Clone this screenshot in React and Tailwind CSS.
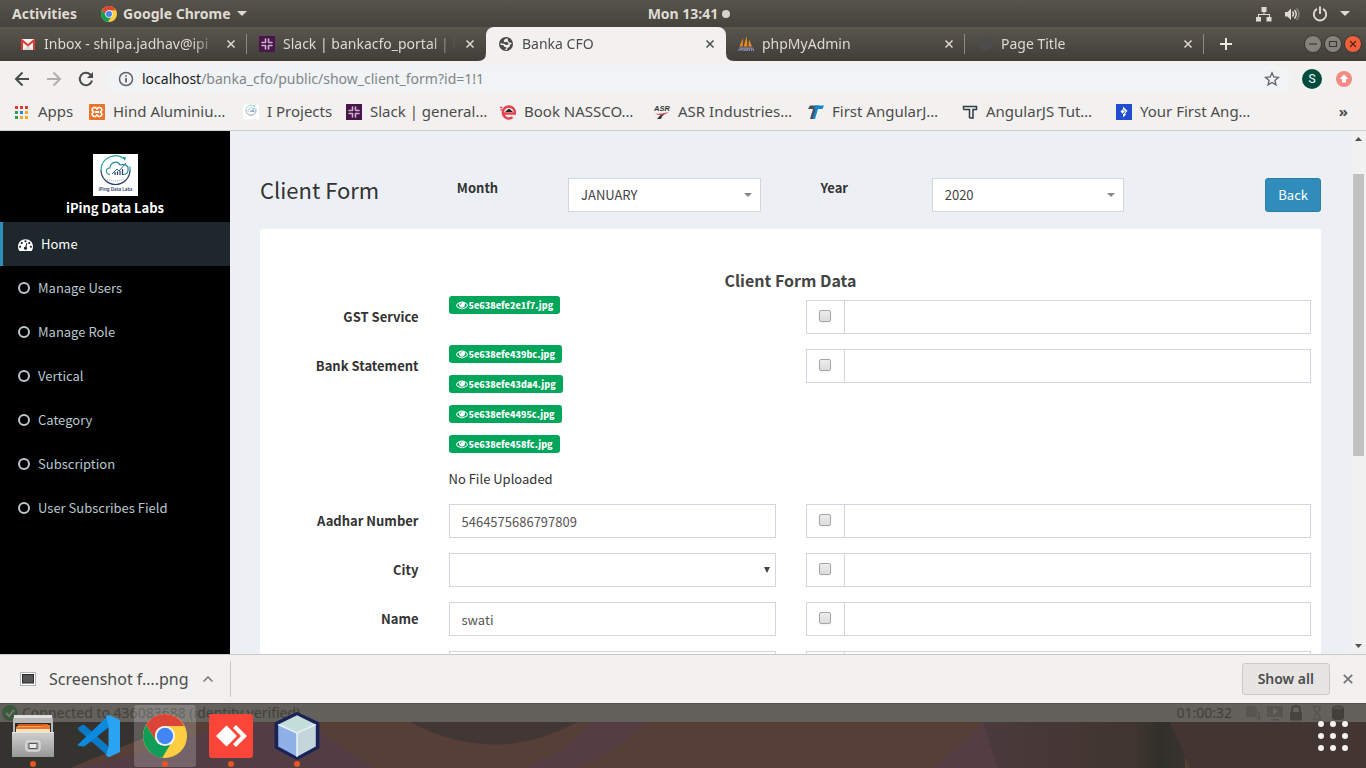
import React from "react";

const uiFont = "font-['Noto_Sans','Open_Sans',sans-serif]";
const pageFont = "font-['Noto_Sans_CJK_SC','Noto_Sans',sans-serif]";

/* ---------- shared drawings ---------- */

function ChromeLogo({ className }) {
  return (
    <svg viewBox="0 0 48 48" className={className} aria-hidden="true">
      <circle cx="24" cy="24" r="24" fill="#ffcd40" />
      <path d="M24 0a24 24 0 0 1 20.9 13H24a11 11 0 0 0-9.6 16.4L3.4 11.9A24 24 0 0 1 24 0z" fill="#db4437" />
      <path d="M3.3 12A24 24 0 0 0 21 47.8l10.4-17.2A11 11 0 0 1 14.4 29.400z" fill="#0f9d58" />
      <circle cx="24" cy="24" r="11" fill="#f4f4f4" />
      <circle cx="24" cy="24" r="8.900" fill="#4285f4" />
    </svg>
  );
}

function GmailLogo() {
  return (
    <svg viewBox="0 0 16 16" className="size-4">
      <path d="M1 3h14v11H1z" fill="#f2f2f2" />
      <path d="M3.500 14 8 9l4.500 5z" fill="#d9d9d9" />
      <path d="M1 14V3.500C1 3 1.400 3 2 3l6 5 6-5c.6 0 1 0 1 .5V14h-2V6.500L8 10.500l-5-4V14z" fill="#dd3b32" />
    </svg>
  );
}

function SlackLogo() {
  return (
    <svg viewBox="0 0 16 16" className="size-4">
      <path d="M0 0h16v16H0z" fill="#4a154b" />
      <g fill="none" stroke="#c9b3ca" strokeWidth="1.600" strokeLinecap="round">
        <path d="M6.500 3v3.500M3 6.500h2M9.500 3v3M13 6.500h-3M3 9.500h3.500M6.500 10v3M9.500 9.500V13M10 9.500h3" />
      </g>
    </svg>
  );
}

function GlobeIcon({ className }) {
  return (
    <svg viewBox="0 0 16 16" className={className}>
      <circle cx="8" cy="8" r="7" fill="currentColor" />
      <path d="M9.500 2.300 7 3 5.500 5.200 7 6.300l2-.5 1.500 1.400-.5 1.600-2 .2-2-1.200-3.800-.6.300 1.500 3 .6 1 1.600 2 .3-.3 1.400L6.500 14l2-.1 1.200-2 2-1.500.3-2L13.800 8l-1-1.500-1.500.3-1.300-2z" fill="#f2f1f0" />
    </svg>
  );
}

function PmaLogo() {
  return (
    <svg viewBox="0 0 16 16" className="size-4">
      <path d="M5 2 4.700 10.500H1.500zM8.500 0l1 10.500H5.800zM11 3.500l3 7h-3.500z" fill="#f08c1c" />
      <path d="M1 11.500h14l-1 1.200H2z" fill="#8b8bb5" />
      <path d="M1 15v-2l2 1 1-1v2m2-2v2m0-1h2m0-1v2m1 0v-2l1.500 1 1-1v2m2 0v-2h2v2" fill="none" stroke="#8f90b8" />
    </svg>
  );
}

function CloudLogo({ className, caption }) {
  return (
    <svg viewBox="0 0 45 42" className={className} role="img" aria-label="iPing Data Labs">
      <path d="M0 0h45v42H0z" fill="#fff" />
      <path d="M8 16a14.500 14.500 0 0 0 29 0" fill="none" stroke="#27406f" strokeWidth="1.200" />
      <path d="M8 16A14.500 14.500 0 0 1 31 4.500M36.800 12.500q.3 2 .2 3.500" fill="none" stroke="#23a6a0" strokeWidth="1.200" />
      <path d="m29 3 4 .2-1 3.500z" fill="#16a08f" />
      <path d="M17 20.500c-5 0-5-7 0-6.500 0-6 8-8 10-3 5-2 9 1 8 5 0 3-2 4.500-5 4.500" fill="none" stroke="#2b8b9c" strokeWidth="1.100" />
      <path d="m19 20 5-5 2 2 7-8" fill="none" stroke="#1f6f94" />
      <path d="M22 21v-3m2.500 3v-3.500m2.500 3.500v-4m2.500 4v-6" stroke="#2c3f73" strokeWidth="1.200" />
      <path d="M14 25.500q8 3 17 0" fill="none" stroke="#8796b5" strokeDasharray="1 1" />
      {caption && (
        <text x="22.500" y="37" textAnchor="middle" fontSize="4.500" fontWeight="600" fill="#2b3a6b" fontFamily="Noto Sans">
          iPing Data Labs
        </text>
      )}
    </svg>
  );
}

function CloseX({ className }) {
  return (
    <svg viewBox="0 0 10 10" className={className}>
      <path d="m1.500 1.500 7 7m0-7-7 7" stroke="currentColor" strokeWidth="1.500" />
    </svg>
  );
}

/* ---------- desktop top bar ---------- */

function TopBar() {
  return (
    <header className="grid h-[27px] shrink-0 grid-cols-3 items-center bg-linear-to-b from-[#57544c] to-[#45433d] pr-4 pl-3 text-sm font-bold text-[#dfdbd2]">
      <div className="flex items-center gap-6">
        <button>Activities</button>
        <button className="flex items-center gap-1.5">
          <ChromeLogo className="size-4" />
          Google Chrome
          <svg viewBox="0 0 10 5" className="h-[5px] w-[10px]"><path d="M0 0h10L5 5z" fill="currentColor" /></svg>
        </button>
      </div>
      <div className="flex items-center justify-center gap-1 pl-4">
        Mon 13:41
        <span className="size-2 rounded-full bg-[#d6d3cc]" />
      </div>
      <div className="flex items-center justify-end gap-3">
        <svg viewBox="0 0 16 16" className="size-4" fill="currentColor">
          <path d="M5.500 1h5v5h-2v2H14v3h1.500v4.500h-5V11H13V9H3v2h2v4.500H0V11h2V8h5.500V6h-2z" />
        </svg>
        <svg viewBox="0 0 16 16" className="size-4" fill="none" stroke="currentColor" strokeWidth="1.500">
          <path d="M1 6v4.500h2.500L7 14V2.500L3.500 6z" fill="currentColor" stroke="none" />
          <path d="M8.500 5.500q2 2.500 0 5M10.500 4q3.500 4 0 8.500" />
          <path d="M12.500 2.500q5 5.500 0 11.500" opacity=".4" />
        </svg>
        <svg viewBox="0 0 16 16" className="size-4" fill="none" stroke="currentColor" strokeWidth="1.900">
          <path d="M5 2.800a6.200 6.200 0 1 0 6 0M8 .5V8" />
        </svg>
        <svg viewBox="0 0 10 5" className="h-[5px] w-[10px]"><path d="M0 0h10L5 5z" fill="currentColor" /></svg>
      </div>
    </header>
  );
}

/* ---------- browser chrome ---------- */

const tabs = [
  { title: "Inbox - shilpa.jadhav@ipi", icon: <GmailLogo />, line: true },
  { title: "Slack | bankacfo_portal | i", icon: <SlackLogo /> },
  { title: "Banka CFO", icon: <GlobeIcon className="size-4 text-[#4a4a48]" />, active: true },
  { title: "phpMyAdmin", icon: <PmaLogo />, line: true },
  { title: "Page Title", icon: <span className="size-3.5 rounded-full bg-[#4c4c4b]" />, line: true },
];

function Tab({ title, icon, active, line }) {
  return (
    <div
      className={
        active
          ? "relative flex h-full max-w-[240px] flex-1 items-center gap-2 rounded-t-lg bg-[#f2f1f0] pr-[11px] pl-3 text-[#4c4c4c]"
          : "relative flex h-full max-w-[239px] flex-1 items-center gap-2 pr-[11px] pl-3 text-[#dedad2]"
      }
    >
      {active && (
        <>
          <svg viewBox="0 0 8 8" className="absolute bottom-0 -left-2 size-2"><path d="M8 0v8H0q8 0 8-8z" fill="#f2f1f0" /></svg>
          <svg viewBox="0 0 8 8" className="absolute -right-2 bottom-0 size-2"><path d="M0 0v8h8Q0 8 0 0z" fill="#f2f1f0" /></svg>
        </>
      )}
      <span className="flex w-4 shrink-0 justify-center">{icon}</span>
      <a href="#tab" className="min-w-0 flex-1 overflow-hidden mask-r-from-85% mask-r-to-100% whitespace-nowrap">{title}</a>
      <button aria-label={"Close " + title}><CloseX className="size-[10px]" /></button>
      {line && <span className="absolute top-[7px] right-0 h-5 w-px bg-[#8b8982]" />}
    </div>
  );
}

function WindowButton({ label, close, children }) {
  return (
    <button
      aria-label={label}
      className={
        close
          ? "flex size-4 items-center justify-center rounded-full bg-[#ef5f3c] text-[#5b1f10] ring-1 ring-[#3a3833]"
          : "flex size-4 items-center justify-center rounded-full bg-[#85837c] text-[#3a3833] ring-1 ring-[#3a3833]"
      }
    >
      <svg viewBox="0 0 10 10" className="size-[10px]" fill="none" stroke="currentColor" strokeWidth="1.200">{children}</svg>
    </button>
  );
}

function TabStrip() {
  return (
    <nav className="flex h-[34px] shrink-0 items-center bg-linear-to-b from-[#59564e] to-[#403e39] pr-[5px] pl-2 text-sm">
      {tabs.map((t) => <Tab key={t.title} {...t} />)}
      <button aria-label="New tab" className="ml-4 text-[#ebe8e2]">
        <svg viewBox="0 0 12 12" className="size-3"><path d="M6 0v12M0 6h12" stroke="currentColor" strokeWidth="2" /></svg>
      </button>
      <div className="ml-auto flex gap-1">
        <WindowButton label="Minimize"><path d="M1 5h8" /></WindowButton>
        <WindowButton label="Maximize"><path d="M1.500 2.500h7v5h-7z" /></WindowButton>
        <WindowButton label="Close" close><path d="m2 2 6 6m0-6L2 8" /></WindowButton>
      </div>
    </nav>
  );
}

function Toolbar() {
  return (
    <div className="flex h-9 shrink-0 items-center bg-[#f2f1f0] pr-3.5 pl-3.5 text-[#4c4c4c]">
      <div className="flex items-center gap-4">
        <button aria-label="Back">
          <svg viewBox="0 0 16 16" className="size-4" fill="none" stroke="currentColor" strokeWidth="2"><path d="M15 8H2m6.500-6.500L2 8l6.500 6.500" /></svg>
        </button>
        <button aria-label="Forward" className="text-[#b0afad]">
          <svg viewBox="0 0 16 16" className="size-4" fill="none" stroke="currentColor" strokeWidth="2"><path d="M1 8h13M7.500 1.500 14 8l-6.500 6.500" /></svg>
        </button>
        <button aria-label="Reload">
          <svg viewBox="0 0 16 16" className="size-4" fill="none" stroke="currentColor" strokeWidth="2"><path d="M14 9.500A6.200 6.200 0 1 1 12.500 3.700L14 5.500" /><path d="M15 1v6H9z" fill="currentColor" stroke="none" /></svg>
        </button>
      </div>
      <div className="ml-3.5 flex h-7 flex-1 items-center gap-2 rounded-full bg-[#f1f3f4] pr-2.5 pl-2.5">
        <svg viewBox="0 0 16 16" className="size-4" fill="none" stroke="#5f6368" strokeWidth="1.500"><circle cx="8" cy="8" r="6.500" /><path d="M8 7v4.500M8 4.200v1.600" strokeWidth="1.800" /></svg>
        <span className="min-w-0 flex-1 text-sm text-[#80868b]"><span className="text-[#202124]">localhost</span>/banka_cfo/public/show_client_form?id=1!1</span>
        <button aria-label="Bookmark this page">
          <svg viewBox="0 0 16 16" className="size-4" fill="none" stroke="#5f6368" strokeWidth="1.300"><path d="m8 1.800 1.800 4.200 4.600.4-3.500 3 1.100 4.500L8 11.500l-4 2.400 1.100-4.500-3.500-3L6.200 6z" /></svg>
        </button>
      </div>
      <button className="ml-3 flex size-5 items-center justify-center rounded-full bg-[#004d40] font-['Roboto'] text-xs text-white">S</button>
      <button aria-label="Update" className="ml-3.5">
        <svg viewBox="0 0 16 16" className="size-4"><circle cx="8" cy="8" r="8" fill="#f58b84" /><path d="M8 3.500 12.500 8H10v3.500H6V8H3.500z" fill="#fff" /></svg>
      </button>
    </div>
  );
}

const bookmarks = [
  {
    title: "Hind Aluminiu…",
    icon: <svg viewBox="0 0 16 16" className="size-4"><rect width="16" height="16" rx="1" fill="#e8742c" /><path d="M5 3.500h1.500L8 5l1.500-1.500H11Q13 4 13 6L11.500 8l1.500 2q0 2-2 2.500H9.500L8 11l-1.500 1.500H5Q3 12 3 10l1.500-2L3 6q0-2 2-2.500z" fill="none" stroke="#fff" strokeWidth="1.600" /><path d="M6 8h4" stroke="#fff" strokeWidth="2" /></svg>,
  },
  { title: "I Projects", icon: <CloudLogo className="size-4" />, short: true },
  { title: "Slack | general…", icon: <SlackLogo /> },
  {
    title: "Book NASSCO…",
    icon: <svg viewBox="0 0 16 16" className="size-4" fill="none" stroke="#e7404e"><path d="M3.500 9.500h11.300a6 6 0 1 0-2.300 3.800" strokeWidth="2.400" /><path d="M0 3.500h2.500M.5 6h2" strokeWidth="1.300" /><path d="m5 8 4-3.500L13 8z" fill="#222" stroke="none" /></svg>,
  },
  {
    title: "ASR Industries…",
    icon: <svg viewBox="0 0 16 16" className="size-4"><text x="0" y="7" fontSize="7.500" fontWeight="700" fontStyle="italic" fontFamily="Liberation Sans" fill="#333">ASR</text><path d="M1 9.500q6 1 14-1.500-6 5-12 2.500z" fill="#e34b60" /><path d="m3 15 3-3.500 5-2-3 3-1 2.500z" fill="#3a3a3a" /></svg>,
  },
  {
    title: "First AngularJ…",
    icon: <svg viewBox="0 0 16 16" className="size-4"><path d="M2 1.500h9L10 5H0z" fill="#4b4f55" /><path d="M7 1.500h9L14.500 5H10L7 15H2.500L6.500 3z" fill="#1488cf" /><path d="M5 5h2.500l-3 10H2z" fill="#4b4f55" /></svg>,
  },
  {
    title: "AngularJS Tut…",
    icon: <svg viewBox="0 0 16 16" className="size-4" fill="none" stroke="#2d3b45" strokeWidth="1.500"><path d="M1.500 5.500v-3h13v3H11V14H7.500M1.500 5.500H5M4 5.500h3.500V14" /></svg>,
  },
  {
    title: "Your First Ang…",
    icon: <svg viewBox="0 0 16 16" className="size-4"><path d="M0 0h16v16H0z" fill="#204ecf" /><path d="m7 2.500 4.500 4.500L9 9.500l1 1-3 3V10L4.500 7.500 7 5z" fill="#fff" /><path d="m7 5.500 2 2-2 2.500" stroke="#204ecf" fill="none" /></svg>,
  },
];

const appDots = ["#e53935", "#e53935", "#e53935", "#2e9d57", "#1e88e5", "#f9a825", "#2e9d57", "#f9a825", "#f9a825"];

function BookmarkBar() {
  return (
    <nav className="flex h-[34px] shrink-0 items-center border-b border-[#cfcfce] bg-[#f2f1f0] pr-[18px] pb-1 pl-3.5 text-[15px] text-[#4c4c4c]">
      <a href="#apps" className="flex w-[75px] shrink-0 items-center gap-2">
        <svg viewBox="0 0 16 16" className="size-4">
          {appDots.map((c, i) => <rect key={i} x={1 + (i % 3) * 5} y={2 + Math.floor(i / 3) * 5} width="3" height="3" fill={c} />)}
        </svg>
        Apps
      </a>
      {bookmarks.map((b) => (
        <a
          key={b.title}
          href="#bookmark"
          className={b.short ? "flex w-[103px] shrink-0 items-center gap-2 whitespace-nowrap" : "flex w-[154px] shrink-0 items-center gap-2 whitespace-nowrap"}
        >
          {b.icon}
          {b.title}
        </a>
      ))}
      <button className="ml-auto font-bold">»</button>
    </nav>
  );
}

/* ---------- page ---------- */

const menu = ["Manage Users", "Manage Role", "Vertical", "Category", "Subscription", "User Subscribes Field"];

function Sidebar() {
  return (
    <aside className="w-[230px] shrink-0 bg-black text-[13px] leading-5 text-[#b8c7ce]">
      <div className="flex h-[91px] flex-col items-center pt-[23px]">
        <CloudLogo className="h-[42px] w-[45px]" caption />
        <p className="mt-0.5 font-bold text-white">iPing Data Labs</p>
      </div>
      <nav>
        <a href="#home" className="flex h-11 items-center gap-2 border-l-3 border-[#308dbb] bg-[#1e282c] pl-[15px] text-white">
          <svg viewBox="0 0 1792 1792" className="size-[15px]" fill="currentColor">
            <path d="M384 1152q0-53-37.500-90.500t-90.500-37.500-90.500 37.500-37.500 90.500 37.500 90.500 90.500 37.500 90.500-37.500 37.500-90.500zm192-448q0-53-37.500-90.500t-90.500-37.500-90.500 37.500-37.500 90.500 37.500 90.500 90.500 37.500 90.500-37.500 37.500-90.500zm428 481l101-382q6-26-7.500-48.500t-38.500-29.500-48 6.500-30 39.500l-101 382q-60 5-107 43.500t-63 98.500q-20 77 20 146t117 89 146-20 89-117q16-60-6-117t-72-91zm660-33q0-53-37.500-90.500t-90.500-37.500-90.500 37.500-37.500 90.500 37.500 90.500 90.500 37.500 90.500-37.500 37.500-90.500zm-640-640q0-53-37.500-90.500t-90.500-37.500-90.500 37.500-37.500 90.500 37.500 90.500 90.500 37.500 90.500-37.500 37.500-90.500zm448 192q0-53-37.500-90.500t-90.500-37.500-90.500 37.500-37.500 90.500 37.500 90.500 90.500 37.500 90.500-37.500 37.500-90.500zm320 448q0 261-141 483-19 29-54 29h-1402q-35 0-54-29-141-221-141-483 0-182 71-348t191-286 286-191 348-71 348 71 286 191 191 286 71 348z" />
          </svg>
          Home
        </a>
        {menu.map((m) => (
          <a key={m} href="#menu" className="flex h-11 items-center gap-2 pl-[18px]">
            <svg viewBox="0 0 12 12" className="size-3"><circle cx="6" cy="6" r="5" fill="none" stroke="currentColor" strokeWidth="2" /></svg>
            {m}
          </a>
        ))}
      </nav>
    </aside>
  );
}

function HeaderSelect({ id, label, value }) {
  return (
    <div className="col-span-4 grid grid-cols-12 px-[15px]">
      <label htmlFor={id} className="col-span-4 px-[15px] font-bold">{label}</label>
      <div className="relative col-span-8 px-[15px]">
        <select id={id} className="block h-[34px] w-full appearance-none border border-[#d2d6de] bg-white px-3 text-[#444]">
          <option>{value}</option>
        </select>
        <svg viewBox="0 0 8 4" className="pointer-events-none absolute top-[15px] right-6 h-1 w-2"><path d="M0 0h8L4 4z" fill="#888" /></svg>
      </div>
    </div>
  );
}

function FileBadge({ name }) {
  return (
    <a href="#file" className="flex h-[18px] items-center gap-px rounded-[3px] bg-[#00a65a] px-[7px] text-[9px] leading-none font-black text-white">
      <svg viewBox="0 0 1792 1792" className="size-3" fill="currentColor">
        <path d="M1664 960q-152-236-381-353 61 104 61 225 0 185-131.500 316.500t-316.500 131.500-316.500-131.500-131.500-316.500q0-121 61-225-229 117-381 353 133 205 333.500 326.500t434.500 121.500 434.500-121.500 333.500-326.500zm-720-384q0-20-14-34t-34-14q-125 0-214.500 89.500t-89.500 214.500q0 20 14 34t34 14 34-14 14-34q0-86 61-147t147-61q20 0 34-14t14-34zm848 384q0 34-20 69-140 230-376.500 368.500t-499.500 138.500-499.500-139-376.500-368q-20-35-20-69t20-69q140-229 376.500-368t499.500-139 499.500 139 376.500 368q20 35 20 69z" />
      </svg>
      {name}
    </a>
  );
}

function FormRow({ id, label, children }) {
  return (
    <div className="-mx-[15px] grid grid-cols-12">
      <label htmlFor={id} className="col-span-2 px-[15px] pt-[7px] text-right font-bold">{label}</label>
      <div className="col-span-4 px-[15px]">{children}</div>
      <div className="col-span-6 px-[15px]">
        <div className="flex h-[34px] border border-[#d2d6de]">
          <span className="flex w-[38px] justify-center border-r border-[#d2d6de] pt-[9px]">
            <input
              type="checkbox"
              aria-label={"Flag " + (label || "entry")}
              className="size-3 appearance-none rounded-xs border border-[#a6a6a6] bg-linear-to-b from-[#ededed] to-[#dcdcdc] shadow-xs"
            />
          </span>
          <input type="text" aria-label={"Remark for " + (label || "entry")} className="min-w-0 flex-1 px-3 outline-none" />
        </div>
      </div>
    </div>
  );
}

const fieldClass = "block h-[34px] w-full border border-[#d2d6de] bg-white px-3 text-[#555] outline-none";

function ClientForm() {
  return (
    <main className="min-w-0 flex-1 overflow-hidden bg-[#ecf0f5] px-[30px] pt-[47px] text-[13px] leading-5 text-[#333]">
      <div className="-mx-[15px] mb-[17px] grid grid-cols-12">
        <h1 className="col-span-2 px-[15px] text-[22px] leading-[22px] whitespace-nowrap">Client Form</h1>
        <HeaderSelect id="month" label="Month" value="JANUARY" />
        <HeaderSelect id="year" label="Year" value="2020" />
        <div className="col-span-2 px-[15px] text-right">
          <button className="h-[34px] rounded-[3px] border border-[#2a7fa8] bg-[#308dbb] px-3 text-white">Back</button>
        </div>
      </div>
      <form className="rounded-[3px] bg-white px-2.5 pt-[41px]">
        <h2 className="mb-2.5 text-center text-base leading-5 font-bold text-[#444]">Client Form Data</h2>
        <div className="flex flex-col gap-[15px]">
          <FormRow label="GST Service">
            <div className="-mt-1 flex flex-col items-start"><FileBadge name="5e638efe2e1f7.jpg" /></div>
          </FormRow>
          <FormRow label="Bank Statement">
            <div className="-mt-1 flex flex-col items-start gap-3">
              <FileBadge name="5e638efe439bc.jpg" />
              <FileBadge name="5e638efe43da4.jpg" />
              <FileBadge name="5e638efe4495c.jpg" />
              <FileBadge name="5e638efe458fc.jpg" />
              <p className="mt-1">No File Uploaded</p>
            </div>
          </FormRow>
          <FormRow id="aadhar" label="Aadhar Number">
            <input id="aadhar" type="text" defaultValue="5464575686797809" className={fieldClass} />
          </FormRow>
          <FormRow id="city" label="City">
            <div className="relative">
              <select id="city" className={fieldClass + " appearance-none"}><option></option></select>
              <svg viewBox="0 0 6 6" className="pointer-events-none absolute top-[14px] right-1.5 size-1.5"><path d="M0 0h6L3 6z" fill="#444" /></svg>
            </div>
          </FormRow>
          <FormRow id="name" label="Name">
            <input id="name" type="text" defaultValue="swati" className={fieldClass} />
          </FormRow>
          <FormRow id="extra">
            <input id="extra" type="text" aria-label="Additional detail" className={fieldClass} />
          </FormRow>
        </div>
      </form>
    </main>
  );
}

function ScrollBar() {
  return (
    <div className="flex w-[15px] shrink-0 flex-col items-center bg-[#f1f1f1] py-1.5" aria-hidden="true">
      <svg viewBox="0 0 7 4" className="h-1 w-[7px]"><path d="M0 4h7L3.500 0z" fill="#505050" /></svg>
      <div className="mt-[33px] h-[282px] w-[11px] bg-[#c1c1c1]" />
      <svg viewBox="0 0 7 4" className="mt-auto h-1 w-[7px]"><path d="M0 0h7L3.500 4z" fill="#505050" /></svg>
    </div>
  );
}

/* ---------- downloads and dock ---------- */

function DownloadBar() {
  return (
    <div className="flex h-[49px] shrink-0 items-center border-t border-[#cac9c8] bg-[#f2f1f0] pr-3 text-[#4c4c4c]">
      <div className="flex h-9 w-[231px] items-center border-r border-[#cac9c8] pl-5">
        <svg viewBox="0 0 16 14" className="h-[14px] w-4"><path d="M.5.500h15v13H.5z" fill="#fff" stroke="#b5b5b5" /><path d="M2 2h12v9.500H2z" fill="#2a2a2a" /><path d="M3 3h10v7.500H3z" fill="#555" /></svg>
        <button className="ml-[13px] text-base">Screenshot f….png</button>
        <svg viewBox="0 0 10 6" className="ml-3.5 h-1.5 w-2.5"><path d="m.5 5.500 4.500-4.500 4.500 4.500" fill="none" stroke="#777" strokeWidth="1.500" /></svg>
      </div>
      <button className="ml-auto h-8 rounded-[3px] border border-[#cbcac9] bg-[#e6e5e4] px-[15px] text-sm font-semibold">Show all</button>
      <button aria-label="Close downloads" className="ml-3 text-[#777]"><CloseX className="size-3" /></button>
    </div>
  );
}

function Wallpaper() {
  return (
    <svg viewBox="0 0 1366 65" preserveAspectRatio="none" className="absolute inset-0 size-full">
      <defs>
        <linearGradient id="stripes" x1="0" x2="1">
          <stop offset="0" stopColor="#4b3a3c" />
          <stop offset=".75" stopColor="#40352f" />
          <stop offset=".88" stopColor="#30302b" />
          <stop offset="1" stopColor="#3a322e" />
        </linearGradient>
      </defs>
      <path d="M0 0h1366v65H0z" fill="#563f36" />
      <path d="M0 0h230L70 65H0z" fill="#35332f" />
      <path d="M230 19h80q20 20 65 46H70q90-15 160-46z" fill="#523d44" />
      <path d="M410 19q85 45 167 0z" fill="#433735" />
      <path d="M590 19h55q-25 30-70 46h-52q45-15 67-46z" fill="#543d43" />
      <path d="M985 19 932 65h70z" fill="#553d44" />
      <path d="M983 19h202v46H997z" fill="url(#stripes)" />
      <path d="M1170 19h196v46h-176z" fill="#423532" />
    </svg>
  );
}

function DockItem({ label, active, running, children }) {
  return (
    <button
      aria-label={label}
      className={
        active
          ? "relative flex h-[62px] w-[62px] items-center justify-center rounded-[3px] bg-white/20"
          : "relative flex h-[62px] w-[62px] items-center justify-center"
      }
    >
      {children}
      {running && <span className="absolute bottom-0 left-1/2 size-1.5 -translate-x-1/2 rounded-full bg-[#e95420]" />}
    </button>
  );
}

function Dock() {
  return (
    <footer className="relative h-[65px] shrink-0 overflow-hidden bg-[#423532]">
      <Wallpaper />
      <div className="absolute inset-x-0 top-0 flex h-[19px] items-center border-t border-[#55534f] bg-[#62615c] pr-5 pl-0.5 text-sm text-[#41403b]">
        <svg viewBox="0 0 16 16" className="size-4"><circle cx="8" cy="8" r="8" fill="#3c5a3b" /><path d="m4 8 3 3 5-6" fill="none" stroke="#73756f" strokeWidth="2" /></svg>
        <span className="ml-1">Connected to 436083688 (identity verified).</span>
        <span className="mr-3.5 ml-auto">01:00:32</span>
        <div className="flex gap-[5px]">
          <svg viewBox="0 0 16 16" className="size-4" fill="#565550"><path d="M0 1h7l4 2v9H0zM12 7h2v5h2l-3 4-3-4h2z" /></svg>
          <svg viewBox="0 0 16 16" className="size-4" fill="#555450"><path d="M0 1h16v11H0zm4 13h8v1.500H4z" /><path d="m6 3 5 3.500L6 10z" fill="#686762" /></svg>
          <svg viewBox="0 0 16 16" className="size-4" fill="#45443f"><path d="M2 7h12v8.500H2z" /><path d="M4 7V4q0-3 4-3t4 3v3" fill="none" stroke="#45443f" strokeWidth="2" /></svg>
          <svg viewBox="0 0 16 16" className="size-4" fill="none" stroke="#555450" strokeWidth="1.500"><path d="M4 1.500h8M4 14.500h8M5 2q0 4 3 6-3 2-3 6M11 2q0 4-3 6 3 2 3 6" /></svg>
          <svg viewBox="0 0 16 16" className="size-4" fill="#41403b"><path d="M2 3v10q0 2 6 2t6-2V3z" /><ellipse cx="8" cy="3" rx="5.500" ry="2" fill="#51504b" stroke="#41403b" /></svg>
        </div>
      </div>
      <div className="relative flex h-full items-center justify-between pt-0.5 pr-[18px] pb-px pl-0.5">
        <div className="flex gap-1">
          <DockItem label="Files" running>
            <svg viewBox="0 0 44 44" className="size-11">
              <defs><linearGradient id="cab" x1="0" y1="0" x2="0" y2="1"><stop offset="0" stopColor="#d0d0d0" /><stop offset="1" stopColor="#989898" /></linearGradient></defs>
              <path d="M4 1h36l2 4v38H2V5z" fill="#b9b9b9" />
              <path d="M3 1h38v3H3z" fill="#e0e0e0" />
              <path d="M4 9h36v9H4z" fill="#2d2a28" />
              <path d="M7 10h30v2H7z" fill="#d9581c" /><path d="M6 12h33v3H6z" fill="#f2a25b" /><path d="M5 13h25l2-2h7v7H5z" fill="#e8762c" /><path d="M5 15h34v3H5z" fill="#fbe2b6" />
              <path d="M1 18h42v25H1z" fill="url(#cab)" />
              <path d="M1 18h42v1H1z" fill="#e4e4e4" />
              <rect x="15" y="27" width="14" height="10" rx="2" fill="#b9b9b9" stroke="#eee" />
              <path d="M18 29.500h8v5h-8z" fill="#e8e8e8" stroke="#555" />
            </svg>
          </DockItem>
          <DockItem label="Visual Studio Code">
            <svg viewBox="0 0 44 44" className="size-11">
              <path d="m1 14 4-3q1.500-.5 3 .5L32 33v10L1.500 16q-1-1 0-2z" fill="#0b79c4" />
              <path d="M1 30.500 32 1v12L8 32q-1.500 1-3 .3L1.500 32q-1-.7-.5-1.500z" fill="#0a8be0" />
              <path d="M32 1q-2 0-3 2l2.500 9v21L29 41q1 2.500 3.500 2L43 38V6z" fill="#2ba3f3" />
            </svg>
          </DockItem>
          <DockItem label="Google Chrome" active running><ChromeLogo className="size-11" /></DockItem>
          <DockItem label="AnyDesk" running>
            <svg viewBox="0 0 44 44" className="size-11"><rect width="44" height="44" rx="3" fill="#fb4538" /><path d="M7 22 17.500 11.500 28 22 17.500 32.500z" fill="#fff" /><path d="m24 14 3-3L38 22 27 33l-3-3 8-8z" fill="#fff" /></svg>
          </DockItem>
          <DockItem label="NetBeans" running>
            <svg viewBox="0 0 44 46" className="h-[48px] w-[46px]">
              <path d="M22 1.500 42 11v23L22 44.500 2 34V11z" fill="#1b2257" stroke="#1b2257" strokeWidth="3" strokeLinejoin="round" />
              <path d="m22 3 18 9-18 8L4 12z" fill="#c3dedb" />
              <path d="m4 12 18 8v23L4 33z" fill="#8fb0e6" />
              <path d="m40 12-18 8v23l18-10z" fill="#c4d5dc" />
              <path d="M4 12 22 20l18-8M22 20v23" fill="none" stroke="#e6f2f5" strokeWidth="1.500" />
            </svg>
          </DockItem>
        </div>
        <button aria-label="Show applications" className="grid grid-cols-3 gap-1.5">
          {[0, 1, 2, 3, 4, 5, 6, 7, 8].map((n) => <span key={n} className="size-1.5 rounded-full bg-[#f2f1f0]" />)}
        </button>
      </div>
    </footer>
  );
}

export default function App() {
  return (
    <div className={"flex h-screen flex-col overflow-hidden " + uiFont}>
      <TopBar />
      <TabStrip />
      <Toolbar />
      <BookmarkBar />
      <div className={"flex min-h-0 flex-1 overflow-hidden " + pageFont}>
        <Sidebar />
        <ClientForm />
        <ScrollBar />
      </div>
      <DownloadBar />
      <Dock />
    </div>
  );
}
